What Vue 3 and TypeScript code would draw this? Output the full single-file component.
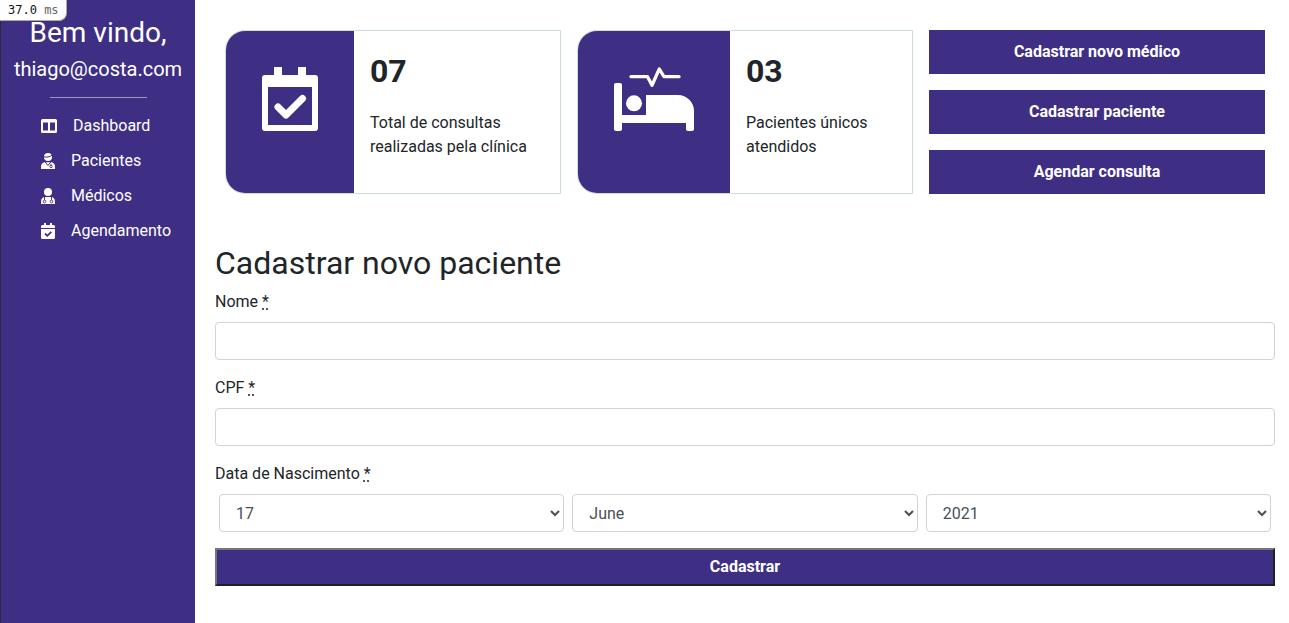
<template>
  <div class="page">
    <div class="timer"><span>37.0</span> <span class="unit">ms</span></div>

    <aside class="sidebar">
      <h1 class="welcome">Bem vindo,</h1>
      <p class="email">thiago@costa.com</p>
      <hr class="divider" />
      <nav class="nav">
        <a href="#" class="nav-item">
          <svg width="16" height="14" viewBox="0 0 16 14">
            <path fill="#fff" fill-rule="evenodd" d="M0 1.5A1.5 1.5 0 0 1 1.5 0h13A1.5 1.5 0 0 1 16 1.5v11a1.5 1.5 0 0 1-1.5 1.5h-13A1.5 1.5 0 0 1 0 12.5zM2 3.500v8h5v-8zm7 0v8h5v-8z" />
          </svg>
          <span>Dashboard</span>
        </a>
        <a href="#" class="nav-item">
          <svg width="14" height="16" viewBox="0 0 14 16">
            <circle cx="7" cy="4" r="4" fill="#fff" />
            <path fill="none" stroke="#3e2f85" stroke-width="1" d="M2.800 3.800C5 4.500 9 4 11 2.200" />
            <path fill="#fff" d="M0 16v-2.800C0 11 1.800 9.200 4 9.200h6c2.200 0 4 1.800 4 4V16z" />
            <path fill="none" stroke="#3e2f85" stroke-width="1" d="M4.200 9 7 12.500 9.800 9M10 11v1" />
            <circle cx="10" cy="13.500" r="1.200" fill="none" stroke="#3e2f85" stroke-width="0.900" />
          </svg>
          <span>Pacientes</span>
        </a>
        <a href="#" class="nav-item">
          <svg width="14" height="16" viewBox="0 0 14 16">
            <circle cx="7" cy="4" r="4" fill="#fff" />
            <path fill="#fff" d="M0 16v-2.800C0 11 1.800 9 4 9h6c2.200 0 4 2 4 4.200V16z" />
            <path fill="none" stroke="#3e2f85" stroke-width="0.900" d="M3.500 9v3M10.500 9v3" />
            <circle cx="3.500" cy="13.500" r="1.300" fill="none" stroke="#3e2f85" stroke-width="0.900" />
            <circle cx="10.500" cy="13.500" r="1.300" fill="none" stroke="#3e2f85" stroke-width="0.900" />
          </svg>
          <span>Médicos</span>
        </a>
        <a href="#" class="nav-item">
          <svg width="14" height="16" viewBox="0 0 14 16">
            <path fill="#fff" d="M3 0h2v2h4V0h2v2h1.500A1.500 1.500 0 0 1 14 3.500V5H0V3.500A1.500 1.500 0 0 1 1.500 2H3z" />
            <path fill="#fff" d="M0 6h14v8.500a1.500 1.500 0 0 1-1.500 1.500h-11A1.500 1.500 0 0 1 0 14.500z" />
            <path fill="none" stroke="#3e2f85" stroke-width="1.800" d="M4 10.500l2.300 2.300 4-4" />
          </svg>
          <span>Agendamento</span>
        </a>
      </nav>
    </aside>

    <main class="content">
      <section class="overview">
        <div class="stat-card">
          <div class="stat-icon">
            <svg width="56" height="64" viewBox="0 0 56 64">
              <path fill="#fff" fill-rule="evenodd" d="M12 0h8v8h16V0h8v8h9a3 3 0 0 1 3 3v50a3 3 0 0 1-3 3H3a3 3 0 0 1-3-3V11a3 3 0 0 1 3-3h9zM6 20v38h44V20z" />
              <path fill="none" stroke="#fff" stroke-width="7" stroke-linecap="round" stroke-linejoin="round" d="M16 40l8 8L40.500 31.500" />
            </svg>
          </div>
          <div class="stat-body">
            <h3>{{ stats[0].value }}</h3>
            <p>{{ stats[0].label }}</p>
          </div>
        </div>

        <div class="stat-card">
          <div class="stat-icon wide">
            <svg width="80" height="64" viewBox="0 0 80 64">
              <path fill="none" stroke="#fff" stroke-width="3.300" stroke-linecap="round" stroke-linejoin="round" d="M17 9.700h16.500l4.500 8.500L45.300 2 50 9.700h15" />
              <rect x="0" y="16" width="8" height="48" rx="2" fill="#fff" />
              <circle cx="20" cy="36.300" r="8" fill="#fff" />
              <path fill="#fff" d="M8 48h24V28h32a16 16 0 0 1 16 16v18a2 2 0 0 1-2 2h-4a2 2 0 0 1-2-2v-6H8z" />
            </svg>
          </div>
          <div class="stat-body">
            <h3>{{ stats[1].value }}</h3>
            <p>{{ stats[1].label }}</p>
          </div>
        </div>

        <div class="actions">
          <a v-for="action in actions" :key="action" href="#" class="action">{{ action }}</a>
        </div>
      </section>

      <form class="patient-form" @submit.prevent>
        <h2>Cadastrar novo paciente</h2>

        <div class="field">
          <label for="nome">Nome <abbr title="required">*</abbr></label>
          <input id="nome" v-model="nome" type="text" class="input-field" />
        </div>

        <div class="field">
          <label for="cpf">CPF <abbr title="required">*</abbr></label>
          <input id="cpf" v-model="cpf" type="text" class="input-field" />
        </div>

        <div class="field">
          <label for="dia">Data de Nascimento <abbr title="required">*</abbr></label>
          <div class="date-row">
            <select id="dia" v-model="dia" class="input-field">
              <option v-for="d in dias" :key="d">{{ d }}</option>
            </select>
            <select v-model="mes" class="input-field">
              <option v-for="m in meses" :key="m">{{ m }}</option>
            </select>
            <select v-model="ano" class="input-field">
              <option v-for="a in anos" :key="a">{{ a }}</option>
            </select>
          </div>
        </div>

        <button type="submit" class="submit-button">Cadastrar</button>
      </form>
    </main>
  </div>
</template>

<script setup lang="ts">
import { ref } from 'vue'

const stats = [
  { value: '07', label: 'Total de consultas realizadas pela clínica' },
  { value: '03', label: 'Pacientes únicos atendidos' }
]

const actions = ['Cadastrar novo médico', 'Cadastrar paciente', 'Agendar consulta']

const dias = Array.from({ length: 31 }, (_, i) => i + 1)
const meses = [
  'January', 'February', 'March', 'April', 'May', 'June',
  'July', 'August', 'September', 'October', 'November', 'December'
]
const anos = [2019, 2020, 2021, 2022]

const nome = ref('')
const cpf = ref('')
const dia = ref(17)
const mes = ref('June')
const ano = ref(2021)
</script>

<style>
html,
body {
  margin: 0;
  background: #fff;
}
</style>

<style scoped>
.page {
  display: flex;
  min-height: 100vh;
  font-family: Roboto, sans-serif;
  font-size: 16px;
  line-height: 1.5;
  color: #212529;
}

/* Sidebar */
.sidebar {
  flex: 0 0 195px;
  box-sizing: border-box;
  background-color: #3e2f85;
  border-left: 1px solid #2a2a3a;
  color: #fff;
  text-align: center;
  padding-top: 14px;
}

.welcome {
  margin: 0;
  font-size: 28px;
  font-weight: 400;
  line-height: 38px;
}

.email {
  margin: 2px 0 0;
  font-size: 20px;
  line-height: 30px;
}

.divider {
  width: 97px;
  margin: 13px auto 0;
  border: 0;
  border-top: 1px solid rgba(255, 255, 255, 0.5);
}

.nav {
  margin-top: 10px;
  display: flex;
  flex-direction: column;
}

.nav-item {
  height: 35px;
  display: flex;
  align-items: center;
  gap: 16px;
  padding-left: 40px;
  color: #fff;
  text-decoration: none;
}

.nav-item svg {
  flex: none;
}

/* Cards */
.content {
  flex: 1;
  min-width: 0;
  padding: 0 14px 0 20px;
}

.overview {
  display: grid;
  grid-template-columns: repeat(3, 336px);
  gap: 16px;
  padding: 30px 10px 0;
}

.stat-card {
  display: flex;
  height: 164px;
  box-sizing: border-box;
  border: 1px solid #cfdcdc;
  border-radius: 20px 0 0 20px;
  overflow: hidden;
}

.stat-icon {
  flex: 0 0 128px;
  display: flex;
  justify-content: center;
  align-items: flex-start;
  padding-top: 36px;
  box-sizing: border-box;
  background-color: #3e2f85;
}

.stat-icon.wide {
  flex-basis: 152px;
}

.stat-body {
  padding: 21px 16px 0;
}

.stat-body h3 {
  margin: 0 0 21px;
  font-size: 32px;
  font-weight: 700;
  line-height: 1.2;
}

.stat-body p {
  margin: 0;
}

.actions {
  display: flex;
  flex-direction: column;
  gap: 16px;
}

.action {
  height: 44px;
  display: flex;
  align-items: center;
  justify-content: center;
  background-color: #3e2f85;
  color: #fff;
  font-weight: 700;
  text-decoration: none;
}

/* Form */
.patient-form {
  margin-top: 50px;
}

.patient-form h2 {
  margin: 0 0 8px;
  font-size: 32px;
  font-weight: 400;
  line-height: 1.2;
}

.field {
  margin-bottom: 16px;
}

.field label {
  display: block;
  margin-bottom: 8px;
}

.field abbr {
  text-decoration: underline dotted;
}

.input-field {
  display: block;
  width: 100%;
  height: 38px;
  box-sizing: border-box;
  padding: 6px 12px;
  font-family: inherit;
  font-size: 16px;
  line-height: 1.5;
  color: #495057;
  background-color: #fff;
  border: 1px solid #ced4da;
  border-radius: 4px;
}

.date-row {
  display: flex;
}

.date-row select {
  flex: 1;
  min-width: 0;
  margin: 0 4px;
}

.submit-button {
  display: block;
  width: 100%;
  height: 38px;
  padding: 0 0 2px;
  font-family: inherit;
  font-size: 16px;
  font-weight: 700;
  color: #fff;
  background-color: #3e2f85;
  border: 2px solid;
  border-color: #767676 #212121 #212121 #767676;
}

/* Timer badge */
.timer {
  position: absolute;
  top: 0;
  left: 0;
  width: 67px;
  height: 21px;
  box-sizing: border-box;
  padding-left: 8px;
  background: #fff;
  border-right: 1px solid #aaa;
  border-bottom: 1px solid #aaa;
  border-bottom-right-radius: 8px;
  font-family: 'DejaVu Sans Mono', monospace;
  font-size: 12px;
  line-height: 20px;
  color: #111;
  white-space: pre;
}

.unit {
  color: #666;
}
</style>
